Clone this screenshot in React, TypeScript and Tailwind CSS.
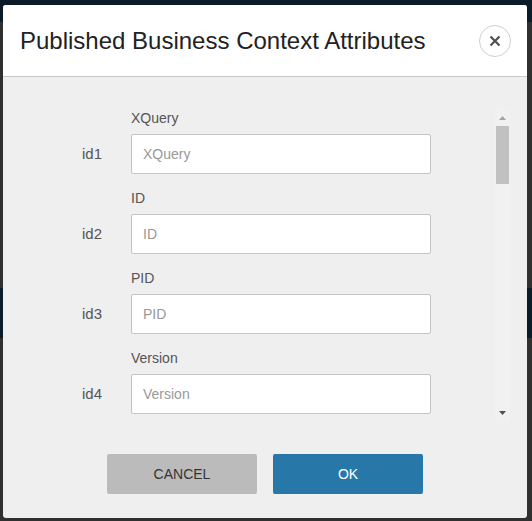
import React from 'react'

const fields = [
  { id: 'id1', label: 'XQuery' },
  { id: 'id2', label: 'ID' },
  { id: 'id3', label: 'PID' },
  { id: 'id4', label: 'Version' },
]

export default function App() {
  return (
    <div
      className="relative w-[532px] h-[521px] overflow-hidden bg-[#303030]"
      style={{ fontFamily: '"Liberation Sans", Arial, sans-serif' }}
    >
      {/* page behind the backdrop */}
      <div className="h-[22px] bg-[#0b1c28]" />
      <div className="mt-[266px] h-[50px] bg-[#0b1c28]" />

      {/* modal */}
      <div className="absolute left-[3px] top-[5px] w-[524px] h-[513px] bg-[#efefef] rounded-[3px] flex flex-col overflow-hidden">
        <div className="h-[72px] shrink-0 bg-white border-b border-[#c8c8c8] flex items-center justify-between pl-[17px] pr-[16px]">
          <h1 className="text-[24px] leading-none text-[#222]">Published Business Context Attributes</h1>
          <button className="w-[32px] h-[32px] rounded-full border border-[#cfcfcf] flex items-center justify-center">
            <svg width="12" height="12" viewBox="0 0 12 12">
              <path d="M1.5 1.5 L10.5 10.5 M10.5 1.5 L1.5 10.5" stroke="#505050" strokeWidth="2.2" />
            </svg>
          </button>
        </div>

        <div className="flex pt-[32px] pr-[17px] h-[345px] shrink-0">
          <div className="flex-1 overflow-hidden pl-[79px] pt-[1px]">
            <div className="flex flex-col gap-4">
              {fields.map((f) => (
                <div key={f.id} className="flex items-end">
                  <div className="w-[49px] h-[40px] flex items-center text-[15px] text-[#555]">{f.id}</div>
                  <div className="flex flex-col">
                    <label className="h-[20px] leading-[17px] mb-1 text-[14px] text-[#555]">{f.label}</label>
                    <input
                      placeholder={f.label}
                      className="w-[300px] h-[40px] bg-white border border-[#c4c4c4] rounded-[2px] px-[11px] text-[14px] placeholder:text-[#999] outline-none"
                    />
                  </div>
                </div>
              ))}
            </div>
          </div>
          {/* scrollbar */}
          <div className="w-[15px] h-[312px] bg-[#f1f1f1] flex flex-col items-center">
            <div className="h-[17px] flex items-center justify-center">
              <svg width="7" height="4" viewBox="0 0 7 4"><path d="M3.5 0 L7 4 L0 4 Z" fill="#a3a3a3" /></svg>
            </div>
            <div className="w-[13px] h-[58px] bg-[#c1c1c1]" />
            <div className="flex-1" />
            <div className="h-[17px] flex items-center justify-center">
              <svg width="7" height="4" viewBox="0 0 7 4"><path d="M0 0 L7 0 L3.5 4 Z" fill="#505050" /></svg>
            </div>
          </div>
        </div>

        <div className="flex justify-center gap-4 pt-[32px]">
          <button className="w-[150px] h-[40px] rounded-[2px] bg-[#bbbbbb] text-[#333] text-[14px]">CANCEL</button>
          <button className="w-[150px] h-[40px] rounded-[2px] bg-[#2777a9] text-white text-[14px]">OK</button>
        </div>
      </div>
    </div>
  )
}
